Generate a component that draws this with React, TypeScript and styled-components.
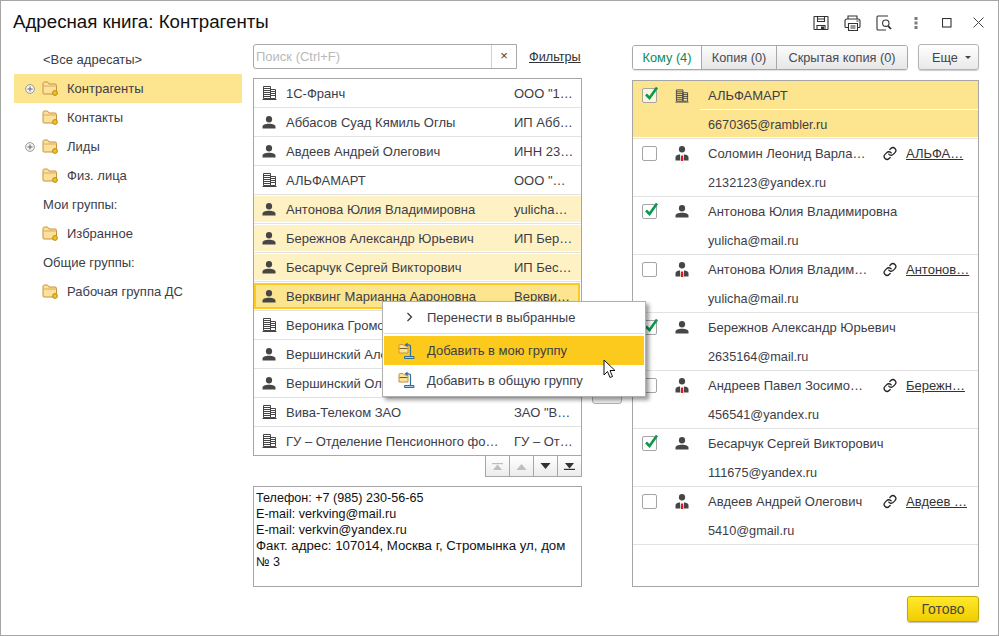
import React from "react";
import styled, { createGlobalStyle, css } from "styled-components";

const Global = createGlobalStyle`
  html, body { margin: 0; padding: 0; background: #fff; }
  body { font-family: "Liberation Sans", Arial, sans-serif; }
`;

const Window = styled.div`
  position: relative;
  width: 999px;
  height: 636px;
  box-sizing: border-box;
  border: 1px solid #a6a6a6;
  background: #fff;
  overflow: hidden;
  color: #3d3d48;
  font-size: 13px;
`;

const Header = styled.header`
  display: flex;
  align-items: center;
  height: 43px;
  padding: 0 4px 0 12px;
`;
const Title = styled.h1`
  flex: 1;
  margin: -2px 0 0;
  font-size: 18.7px;
  font-weight: 400;
  color: #111;
`;
const HeaderIcon = styled.span`
  display: flex;
  width: 31.4px;
  height: 20px;
  align-items: center;
  justify-content: center;
`;

const Body = styled.div`
  display: flex;
  align-items: flex-start;
  padding-left: 13px;
`;

const Tree = styled.nav`
  width: 228px;
  margin-right: 11px;
  padding-top: 1px;
`;
const TreeRow = styled.div<{ $selected?: boolean; $heading?: boolean }>`
  display: flex;
  align-items: center;
  height: 29px;
  padding-left: ${(p) => (p.$heading ? "29px" : "11px")};
  background: ${(p) => (p.$selected ? "#fde48e" : "transparent")};
`;
const Expander = styled.span`
  display: flex;
  width: 17px;
  height: 16px;
  align-items: center;
`;
const TreeLabel = styled.span`
  margin-left: 9px;
`;

const Middle = styled.section`
  width: 329px;
`;
const SearchRow = styled.div`
  display: flex;
  align-items: center;
  height: 25px;
  margin-bottom: 9px;
`;
const SearchBox = styled.div`
  display: flex;
  align-items: stretch;
  width: 264px;
  height: 25px;
  box-sizing: border-box;
  border: 1px solid #a8a8a8;
  border-radius: 3px 0 0 3px;
`;
const SearchText = styled.span`
  flex: 1;
  padding: 4px 0 0 2px;
  font-size: 13px;
  color: #b9b9b9;
`;
const SearchClear = styled.span`
  width: 24px;
  border-left: 1px solid #d0d0d0;
  text-align: center;
  line-height: 21px;
  font-size: 13px;
  color: #444;
`;
const FilterLink = styled.a`
  margin-left: 12px;
  color: #333;
  text-decoration: underline;
  font-size: 12.7px;
`;

const ListBox = styled.div`
  border: 1px solid #a6a6a6;
  height: 378px;
  box-sizing: border-box;
  overflow: hidden;
`;
const ContactRow = styled.div`
  height: 29px;
  box-sizing: border-box;
  padding: 1px 0;
  border-bottom: 1px solid #e2e2e2;
  &:last-child { border-bottom: 0; }
`;
const ContactInner = styled.div<{ $state?: "picked" | "current" }>`
  display: flex;
  align-items: center;
  height: 26px;
  box-sizing: border-box;
  padding-left: 8px;
  white-space: nowrap;
  ${(p) => p.$state === "picked" && css`background: #fef1c3;`}
  ${(p) =>
    p.$state === "current" &&
    css`
      background: #fde48e;
      margin-right: 1px;
      outline: 2px solid #fbca1d;
      outline-offset: -2px;
    `}
`;
const IconSlot = styled.span`
  display: flex;
  width: 24px;
  flex: none;
`;
const ContactName = styled.span`
  width: 228px;
  flex: none;
`;

const Pager = styled.div`
  display: flex;
  justify-content: flex-end;
  height: 21px;
  margin-bottom: 9px;
`;
const PagerCell = styled.span`
  display: flex;
  width: 24px;
  height: 21px;
  box-sizing: border-box;
  align-items: center;
  justify-content: center;
  background: linear-gradient(#fff, #ececec);
  border: 1px solid #a6a6a6;
  border-top: 0;
  border-left-width: 0;
  &:first-child { border-left-width: 1px; width: 25px; }
`;
const Details = styled.div`
  height: 101px;
  box-sizing: border-box;
  border: 1px solid #a6a6a6;
  padding: 3px 0 0 2px;
  font-size: 12.6px;
  line-height: 16px;
  color: #111;
`;
const WideLine = styled.span`
  font-size: 13.25px;
`;

const Mover = styled.div`
  display: flex;
  justify-content: center;
  width: 50px;
  padding-top: 330px;
`;
const MoverButton = styled.span`
  display: block;
  width: 30px;
  height: 30px;
  box-sizing: border-box;
  border: 1px solid #b0b0b0;
  border-radius: 3px;
  background: linear-gradient(#fff, #eee);
`;

const Right = styled.section`
  width: 347px;
`;
const TabBar = styled.div`
  display: flex;
  align-items: flex-start;
  justify-content: space-between;
  height: 36px;
`;
const Tabs = styled.div`
  display: flex;
  margin-top: 1px;
  height: 25px;
  box-sizing: border-box;
  border: 1px solid #a8a8a8;
  border-radius: 3px;
  overflow: hidden;
  box-shadow: 0 1px 1px rgba(0, 0, 0, 0.12);
`;
const Tab = styled.span<{ $active?: boolean; $width: number }>`
  width: ${(p) => p.$width}px;
  box-sizing: border-box;
  text-align: center;
  line-height: 23px;
  font-size: 12.75px;
  border-left: 1px solid #a8a8a8;
  &:first-child { border-left: 0; }
  color: ${(p) => (p.$active ? "#0d8a5a" : "#4a4a52")};
  background: ${(p) => (p.$active ? "#fff" : "linear-gradient(#fcfcfc, #e6e6e6)")};
`;
const MoreButton = styled.span`
  display: flex;
  align-items: center;
  width: 61px;
  height: 26px;
  box-sizing: border-box;
  padding-left: 13px;
  border: 1px solid #b4b4b4;
  border-radius: 3px;
  background: linear-gradient(#fff, #e9e9e9);
  box-shadow: 0 1px 1px rgba(0, 0, 0, 0.2);
  font-size: 12.75px;
  color: #444;
`;
const Caret = styled.span`
  margin-left: 7px;
  border: 3px solid transparent;
  border-top: 3px solid #444;
  border-bottom: 0;
`;

const Recipients = styled.div`
  height: 507px;
  box-sizing: border-box;
  border: 1px solid #a6a6a6;
`;
const Recipient = styled.div<{ $selected?: boolean }>`
  display: grid;
  grid-template-columns: 9px 15px 18px 14px 19px 175px 14px 9px auto;
  grid-template-rows: 29px 28px;
  height: 58px;
  box-sizing: border-box;
  padding-bottom: 1px;
  border-bottom: 1px solid #e2e2e2;
  align-items: center;
  white-space: nowrap;
  background: ${(p) => (p.$selected ? "#fde48e" : "transparent")};
  background-clip: content-box;
`;
const CheckBox = styled.span<{ $selected?: boolean }>`
  grid-column: 2;
  grid-row: 1;
  position: relative;
  width: 15px;
  height: 15px;
  box-sizing: border-box;
  border: 1px solid #a5a5a5;
  border-radius: 2px;
  background: ${(p) => (p.$selected ? "#fdf6dc" : "#fff")};
  & > svg { position: absolute; left: 0; top: -3px; }
`;
const RecIcon = styled.span`
  grid-column: 4;
  grid-row: 1;
  display: flex;
`;
const RecName = styled.span`
  grid-column: 6;
  grid-row: 1;
`;
const LinkIcon = styled.span`
  grid-column: 7;
  grid-row: 1;
  display: flex;
`;
const RecLink = styled.a`
  grid-column: 9;
  grid-row: 1;
  color: #333;
  text-decoration: underline;
`;
const RecMail = styled.span`
  grid-column: 6 / -1;
  grid-row: 2;
  padding-top: 2px;
  font-size: 12.7px;
`;
const RuleLine = styled.span`
  grid-column: 6 / -1;
  grid-row: 1;
  align-self: end;
  height: 1px;
  margin-left: -8px;
  background: #fff;
`;

const Footer = styled.footer`
  display: flex;
  justify-content: flex-end;
  padding: 9px 19px 0 0;
`;
const DoneButton = styled.span`
  display: block;
  width: 72px;
  height: 26px;
  box-sizing: border-box;
  border: 1px solid #c2a800;
  border-radius: 3px;
  background: linear-gradient(#ffe92a, #f1cc00);
  box-shadow: 0 1px 1px rgba(0, 0, 0, 0.25);
  text-align: center;
  line-height: 24px;
  font-size: 14px;
  color: #4a4a3a;
`;

const Menu = styled.div`
  position: absolute;
  left: 381px;
  top: 300px;
  width: 264px;
  height: 96px;
  box-sizing: border-box;
  padding: 1px;
  background: #fff;
  border: 1px solid #b0b0b0;
  box-shadow: 3px 3px 4px rgba(0, 0, 0, 0.4);
`;
const MenuItem = styled.div<{ $active?: boolean; $height: number }>`
  display: flex;
  align-items: center;
  height: ${(p) => p.$height}px;
  padding-left: 14px;
  background: ${(p) => (p.$active ? "#fbca1d" : "transparent")};
`;
const MenuGlyph = styled.span<{ $inset?: number }>`
  display: flex;
  width: ${(p) => 29 - (p.$inset ?? 0)}px;
  margin-left: ${(p) => p.$inset ?? 0}px;
  flex: none;
`;
const MenuRule = styled.div`
  height: 1px;
  margin: 2px 0;
  background: #e2dccb;
`;
const Pointer = styled.svg`
  position: absolute;
  left: 602px;
  top: 358px;
`;

const Building = () => (
  <svg width="15" height="14" viewBox="0 0 15 14" fill="none" stroke="#454545" strokeWidth="1">
    <path d="M1.5.5h7v12h-7zM8.5 3.5h5v9h-5z" />
    <path d="M1.5 2.5h7M1.5 4.5h7M1.5 6.5h7M1.5 8.5h7M1.5 10.5h7M8.5 5.5h5M8.5 7.5h5M8.5 9.5h5" />
    <path d="M.5 13.5h14" />
  </svg>
);
const Person = ({ tie }: { tie?: boolean }) => (
  <svg width="14" height={tie ? 15 : 13} viewBox={tie ? "0 0 14 15" : "0 0 14 13"}>
    <ellipse cx="7" cy="3.3" rx="3.1" ry="3.3" fill="#464646" />
    <path
      d={tie ? "M0.5 14.5v-3c0-2.4 2.6-3.3 6.5-3.3s6.5.9 6.5 3.3v3z" : "M0.5 12.5v-1.6c0-2.2 2.6-3.1 6.5-3.1s6.5.9 6.5 3.1v1.6z"}
      fill="#464646"
    />
    {tie && (
      <>
        <path d="M5 8h4l-.4 7H5.4z" fill="#fff" />
        <path d="M6 9.5h2V15H6z" fill="#e8141c" />
      </>
    )}
  </svg>
);
const Folder = () => (
  <svg width="16" height="15" viewBox="0 0 16 15">
    <path d="M1 12V2.5Q1 1 2.5 1h3L7 3h6q1.5 0 1.5 1.5V12q0 1-1 1H2q-1 0-1-1z" fill="#fde19a" stroke="#c8923f" />
    <path d="M1.5 5h12.5" stroke="#e0a95a" />
    <circle cx="13" cy="12" r="2.4" fill="#f4c31c" stroke="#a88410" strokeWidth="0.9" />
  </svg>
);
const Plus = () => (
  <svg width="10" height="10" viewBox="0 0 10 10" fill="#f3f3f3" stroke="#9a9a9a">
    <circle cx="5" cy="5" r="4.4" />
    <path d="M2.5 5h5M5 2.5v5" stroke="#666" />
  </svg>
);
const Chain = () => (
  <svg width="15" height="15" viewBox="0 0 24 24" fill="none" stroke="#222" strokeWidth="2.2" strokeLinecap="round" strokeLinejoin="round">
    <path d="M10 13a5 5 0 0 0 7.54.54l3-3a5 5 0 0 0-7.07-7.07l-1.72 1.71" />
    <path d="M14 11a5 5 0 0 0-7.54-.54l-3 3a5 5 0 0 0 7.07 7.07l1.71-1.71" />
  </svg>
);
const Check = () => (
  <svg width="16" height="16" viewBox="0 0 16 16" fill="none" stroke="#0a9a4c" strokeWidth="2.6">
    <path d="M3 8.5l3.5 3.5L14 1.5" />
  </svg>
);
const Save = () => (
  <svg width="16" height="16" viewBox="0 0 16 16" fill="none" stroke="#333" strokeWidth="1.1">
    <path d="M1.5 1.5h13q.5 0 .5.5v12q0 .5-.5.5h-13q-.5 0-.5-.5V2q0-.5.5-.5z" />
    <path d="M4.5 1.5v5h7v-5M4.5 4h7M4 14.5v-4h8v4" />
    <rect x="8" y="11.5" width="3" height="3" fill="#333" stroke="none" />
  </svg>
);
const Print = () => (
  <svg width="17" height="16" viewBox="0 0 17 16" fill="none" stroke="#333" strokeWidth="1.1">
    <path d="M4 4V1h9v3M4 12.5H2q-1 0-1-1V6q0-2 2-2h11q2 0 2 2v5.5q0 1-1 1h-2" />
    <path d="M4.5 8.5h9v7h-9zM6.5 11h5M6.5 13h5M12.5 6h2" />
  </svg>
);
const Preview = () => (
  <svg width="16" height="16" viewBox="0 0 16 16" fill="none" stroke="#333" strokeWidth="1.1">
    <path d="M10 15H2q-1 0-1-1V2q0-1 1-1h10" />
    <circle cx="9.8" cy="8.2" r="3.2" />
    <path d="M12 10.8L15 14" strokeWidth="1.8" />
  </svg>
);
const Dots = () => (
  <svg width="4" height="12" viewBox="0 0 4 12" fill="#7a7a7a">
    <rect x="0.5" y="0" width="3" height="3" />
    <rect x="0.5" y="4.5" width="3" height="3" />
    <rect x="0.5" y="9" width="3" height="3" />
  </svg>
);
const Maximize = () => (
  <svg width="10" height="10" viewBox="0 0 10 10" fill="none" stroke="#333" strokeWidth="1.1">
    <rect x="0.5" y="0.5" width="8.5" height="8.5" />
  </svg>
);
const Close = () => (
  <svg width="11" height="11" viewBox="0 0 11 11" fill="none" stroke="#444" strokeWidth="1">
    <path d="M.5.5l10 10M10.5.5l-10 10" />
  </svg>
);
const AddGroup = () => (
  <svg width="17" height="16" viewBox="0 0 17 16" fill="none">
    <path d="M1 10V2.5q0-1 1-1h3L6.500 3H10v7z" fill="#fde19a" stroke="#c8923f" />
    <path d="M1.5 5.500h8" stroke="#7a5f22" />
    <path d="M12.500 13V3.500Q12.500 1.800 10.500 1.800H8M9.500.3l-2 1.500 2 1.500" stroke="#2f6f9e" strokeWidth="1.2" />
    <path d="M6.500 13.500h9.500v2H6.500z" fill="#a9cfe8" stroke="#2f6f9e" />
  </svg>
);
const Arrow = ({ up, edge, off }: { up?: boolean; edge?: boolean; off?: boolean }) => (
  <svg width="11" height="7" viewBox="0 0 11 7" fill={off ? "#bdbdbd" : "#333"}>
    {up ? <path d={edge ? "M5.500 1.500l4.500 5.500H1z" : "M5.500 1l5 6H.500z"} /> : <path d={edge ? "M5.500 5.500L1 0h9z" : "M5.500 6L.500 0h10z"} />}
    {edge && (up ? <rect x="0" y="0" width="11" height="1.2" /> : <rect x="0" y="5.800" width="11" height="1.2" />)}
  </svg>
);

const treeItems: { label: string; plus?: boolean; selected?: boolean; heading?: boolean; folder?: boolean }[] = [
  { label: "<Все адресаты>", heading: true },
  { label: "Контрагенты", plus: true, selected: true, folder: true },
  { label: "Контакты", folder: true },
  { label: "Лиды", plus: true, folder: true },
  { label: "Физ. лица", folder: true },
  { label: "Мои группы:", heading: true },
  { label: "Избранное", folder: true },
  { label: "Общие группы:", heading: true },
  { label: "Рабочая группа ДС", folder: true },
];

type Kind = "org" | "man";
const contacts: { kind: Kind; name: string; info: string; state?: "picked" | "current" }[] = [
  { kind: "org", name: "1С-Франч", info: 'ООО "1…' },
  { kind: "man", name: "Аббасов Суад Кямиль Оглы", info: "ИП Абб…" },
  { kind: "man", name: "Авдеев Андрей Олегович", info: "ИНН 23…" },
  { kind: "org", name: "АЛЬФАМАРТ", info: 'ООО "…' },
  { kind: "man", name: "Антонова Юлия Владимировна", info: "yulicha…", state: "picked" },
  { kind: "man", name: "Бережнов Александр Юрьевич", info: "ИП Бер…", state: "picked" },
  { kind: "man", name: "Бесарчук Сергей Викторович", info: "ИП Бес…", state: "picked" },
  { kind: "man", name: "Верквинг Марианна Аароновна", info: "Верkви…".replace("k", "к"), state: "current" },
  { kind: "org", name: "Вероника Громова", info: "" },
  { kind: "man", name: "Вершинский Алексей", info: "" },
  { kind: "man", name: "Вершинский Олег", info: "" },
  { kind: "org", name: "Вива-Телеком ЗАО", info: 'ЗАО "В…' },
  { kind: "org", name: "ГУ – Отделение Пенсионного фо…", info: "ГУ – От…" },
];

const recipients: { icon: "org" | "man" | "tie"; name: string; mail: string; checked?: boolean; link?: string; selected?: boolean }[] = [
  { icon: "org", name: "АЛЬФАМАРТ", mail: "6670365@rambler.ru", checked: true, selected: true },
  { icon: "tie", name: "Соломин Леонид Варла…", mail: "2132123@yandex.ru", link: "АЛЬФА…" },
  { icon: "man", name: "Антонова Юлия Владимировна", mail: "yulicha@mail.ru", checked: true },
  { icon: "tie", name: "Антонова Юлия Владим…", mail: "yulicha@mail.ru", link: "Антонов…" },
  { icon: "man", name: "Бережнов Александр Юрьевич", mail: "2635164@mail.ru", checked: true },
  { icon: "tie", name: "Андреев Павел Зосимо…", mail: "456541@yandex.ru", link: "Бережн…" },
  { icon: "man", name: "Бесарчук Сергей Викторович", mail: "111675@yandex.ru", checked: true },
  { icon: "tie", name: "Авдеев Андрей Олегович", mail: "5410@gmail.ru", link: "Авдеев …" },
];

export default function App() {
  return (
    <Window>
      <Global />
      <Header>
        <Title>Адресная книга: Контрагенты</Title>
        <HeaderIcon><Save /></HeaderIcon>
        <HeaderIcon><Print /></HeaderIcon>
        <HeaderIcon><Preview /></HeaderIcon>
        <HeaderIcon><Dots /></HeaderIcon>
        <HeaderIcon><Maximize /></HeaderIcon>
        <HeaderIcon><Close /></HeaderIcon>
      </Header>
      <Body>
        <Tree>
          {treeItems.map((t) => (
            <TreeRow key={t.label} $selected={t.selected} $heading={t.heading}>
              {t.heading ? (
                t.label
              ) : (
                <>
                  <Expander>{t.plus && <Plus />}</Expander>
                  <Folder />
                  <TreeLabel>{t.label}</TreeLabel>
                </>
              )}
            </TreeRow>
          ))}
        </Tree>
        <Middle>
          <SearchRow>
            <SearchBox>
              <SearchText>Поиск (Ctrl+F)</SearchText>
              <SearchClear>×</SearchClear>
            </SearchBox>
            <FilterLink>Фильтры</FilterLink>
          </SearchRow>
          <ListBox>
            {contacts.map((c) => (
              <ContactRow key={c.name}>
                <ContactInner $state={c.state}>
                  <IconSlot>{c.kind === "org" ? <Building /> : <Person />}</IconSlot>
                  <ContactName>{c.name}</ContactName>
                  <span>{c.info}</span>
                </ContactInner>
              </ContactRow>
            ))}
          </ListBox>
          <Pager>
            <PagerCell><Arrow up edge off /></PagerCell>
            <PagerCell><Arrow up off /></PagerCell>
            <PagerCell><Arrow /></PagerCell>
            <PagerCell><Arrow edge /></PagerCell>
          </Pager>
          <Details>
            Телефон: +7 (985) 230-56-65
            <br />
            E-mail: verkving@mail.ru
            <br />
            E-mail: verkvin@yandex.ru
            <br />
            <WideLine>Факт. адрес: 107014, Москва г, Стромынка ул, дом</WideLine>
            <br />№ 3
          </Details>
        </Middle>
        <Mover>
          <MoverButton />
        </Mover>
        <Right>
          <TabBar>
            <Tabs>
              <Tab $active $width={68}>Кому (4)</Tab>
              <Tab $width={75}>Копия (0)</Tab>
              <Tab $width={131}>Скрытая копия (0)</Tab>
            </Tabs>
            <MoreButton>
              Еще
              <Caret />
            </MoreButton>
          </TabBar>
          <Recipients>
            {recipients.map((r) => (
              <Recipient key={r.name + r.mail} $selected={r.selected}>
                <CheckBox $selected={r.selected}>{r.checked && <Check />}</CheckBox>
                <RecIcon>
                  {r.icon === "org" ? <Building /> : <Person tie={r.icon === "tie"} />}
                </RecIcon>
                <RecName>{r.name}</RecName>
                {r.selected && <RuleLine />}
                {r.link && (
                  <>
                    <LinkIcon><Chain /></LinkIcon>
                    <RecLink>{r.link}</RecLink>
                  </>
                )}
                <RecMail>{r.mail}</RecMail>
              </Recipient>
            ))}
          </Recipients>
        </Right>
      </Body>
      <Footer>
        <DoneButton>Готово</DoneButton>
      </Footer>
      <Menu>
        <MenuItem $height={28}>
          <MenuGlyph $inset={8}>
            <svg width="7" height="10" viewBox="0 0 7 10" fill="none" stroke="#333" strokeWidth="1.2">
              <path d="M1.500 1l4 4-4 4" />
            </svg>
          </MenuGlyph>
          Перенести в выбранные
        </MenuItem>
        <MenuRule />
        <MenuItem $active $height={29}>
          <MenuGlyph><AddGroup /></MenuGlyph>
          Добавить в мою группу
        </MenuItem>
        <MenuItem $height={30}>
          <MenuGlyph><AddGroup /></MenuGlyph>
          Добавить в общую группу
        </MenuItem>
      </Menu>
      <Pointer width="14" height="21" viewBox="0 0 14 21">
        <path d="M1 1v15l3.500-3.500 2.500 6 2.500-1-2.500-6H12z" fill="#fff" stroke="#111" />
      </Pointer>
    </Window>
  );
}
